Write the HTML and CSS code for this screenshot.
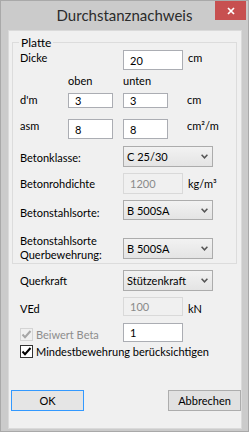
FILE: index.html
```html
<!DOCTYPE html>
<html lang="de">
<head>
    <meta charset="UTF-8">
    <meta name="viewport" content="width=device-width, initial-scale=1.0">
    <title>Durchstanznachweis</title>
    <link rel="stylesheet" href="styles.css">
</head>
<body>
    <div class="window">
        <div class="titlebar">
            <span class="title">Durchstanznachweis</span>
            <span class="close">
                <svg width="8" height="8" viewBox="0 0 8 8"><path d="M1 1L7 7M7 1L1 7" stroke="#fff" stroke-width="1.7"/></svg>
            </span>
        </div>

        <div class="client">
            <fieldset class="group">
                <legend>Platte</legend>

                <div class="row row-dicke">
                    <span class="lbl">Dicke</span>
                    <input class="field w60" value="20">
                    <span class="unit">cm</span>
                </div>

                <div class="row row-heads">
                    <span class="lbl short"></span>
                    <span class="colhead">oben</span>
                    <span>unten</span>
                </div>

                <div class="row row-dm">
                    <span class="lbl short">d'm</span>
                    <input class="field w45" value="3">
                    <input class="field w45 second" value="3">
                    <span class="unit far">cm</span>
                </div>

                <div class="row row-asm">
                    <span class="lbl short">asm</span>
                    <input class="field w45" value="8">
                    <input class="field w45 second" value="8">
                    <span class="unit far">cm²/m</span>
                </div>

                <div class="row row-klasse">
                    <span class="lbl">Betonklasse:</span>
                    <div class="combo">
                        <span>C 25/30</span>
                        <svg class="chev" width="7" height="5" viewBox="0 0 7 5"><path d="M0.6 0.8L3.5 3.8L6.4 0.8" fill="none" stroke="#555" stroke-width="1.5"/></svg>
                    </div>
                </div>

                <div class="row row-dichte">
                    <span class="lbl">Betonrohdichte</span>
                    <input class="field w60" value="1200" disabled>
                    <span class="unit">kg/m³</span>
                </div>

                <div class="row row-stahl">
                    <span class="lbl">Betonstahlsorte:</span>
                    <div class="combo">
                        <span>B 500SA</span>
                        <svg class="chev" width="7" height="5" viewBox="0 0 7 5"><path d="M0.6 0.8L3.5 3.8L6.4 0.8" fill="none" stroke="#555" stroke-width="1.5"/></svg>
                    </div>
                </div>

                <div class="row row-quer">
                    <span class="lbl two">Betonstahlsorte<br>Querbewehrung:</span>
                    <div class="combo">
                        <span>B 500SA</span>
                        <svg class="chev" width="7" height="5" viewBox="0 0 7 5"><path d="M0.6 0.8L3.5 3.8L6.4 0.8" fill="none" stroke="#555" stroke-width="1.5"/></svg>
                    </div>
                </div>
            </fieldset>

            <div class="row outer row-kraft">
                <span class="lbl">Querkraft</span>
                <div class="combo">
                    <span>Stützenkraft</span>
                    <svg class="chev" width="7" height="5" viewBox="0 0 7 5"><path d="M0.6 0.8L3.5 3.8L6.4 0.8" fill="none" stroke="#555" stroke-width="1.5"/></svg>
                </div>
            </div>

            <div class="row outer row-ved">
                <span class="lbl">VEd</span>
                <input class="field w60" value="100" disabled>
                <span class="unit">kN</span>
            </div>

            <div class="row outer row-beta">
                <span class="lbl checklbl disabled">
                    <span class="check">
                        <svg width="11" height="11" viewBox="0 0 11 11"><path d="M1.5 5.5L4 8.2L9.5 2" fill="none" stroke="#a6a6a6" stroke-width="2"/></svg>
                    </span>
                    Beiwert Beta
                </span>
                <input class="field w60" value="1">
            </div>

            <div class="row outer row-min">
                <span class="checklbl">
                    <span class="check">
                        <svg width="11" height="11" viewBox="0 0 11 11"><path d="M1.5 5.5L4 8.2L9.5 2" fill="none" stroke="#000" stroke-width="2"/></svg>
                    </span>
                    Mindestbewehrung berücksichtigen
                </span>
            </div>

            <div class="buttons">
                <button class="btn default">OK</button>
                <button class="btn">Abbrechen</button>
            </div>
        </div>
    </div>
</body>
</html>
```

FILE: styles.css
```css
body {
    margin: 0;
    background: #fff;
    font-family: Lato, "Noto Sans", sans-serif;
    font-size: 11px;
    color: #000;
}

.window {
    width: 249px;
    height: 432px;
    box-sizing: border-box;
    border: 1px solid #a9a9a9;
    background: #cbcbcb;
    display: flex;
    flex-direction: column;
}

.titlebar {
    height: 29px;
    flex: none;
    display: grid;
    grid-template-columns: 1fr auto 1fr;
}

.title {
    grid-column: 2;
    font-size: 15px;
    line-height: 29px;
    color: #2b2b2b;
}

.close {
    grid-column: 3;
    justify-self: end;
    width: 31px;
    height: 19px;
    margin-right: 2px;
    background: #c75050;
    display: flex;
    align-items: center;
    justify-content: center;
}

.client {
    height: 399px;
    box-sizing: border-box;
    margin: 0 6px 0 7px;
    border: 1px solid #dadada;
    background: #f0f0f0;
    display: flex;
    flex-direction: column;
}

/* group box "Platte" */
.group {
    margin: 5px 4px 0 3px;
    padding: 1px 0 4px 7px;
    border: 1px solid #dcdcdc;
    min-width: 0;
}

.group legend {
    padding: 0 2px;
    margin-left: -1px;
    line-height: 13px;
    font-size: 12px;
}

.row {
    display: flex;
    align-items: center;
    flex: none;
}

.row.outer {
    padding-left: 11px;
}

.lbl {
    width: 103px;
    flex: none;
    line-height: 15px;
}

.lbl.short {
    width: 48px;
}

.lbl.two {
    line-height: 14px;
}

.colhead {
    width: 55px;
}

.unit {
    margin-left: 5px;
    line-height: 15px;
}

.unit.far {
    margin-left: 19px;
}

.field {
    box-sizing: border-box;
    height: 100%;
    margin: 0;
    border: 1px solid #abadb3;
    background: #fff;
    padding: 0 6px;
    font: inherit;
    color: #000;
    outline: none;
}

.field:disabled {
    background: #f0f0f0;
    border-color: #d9d9d9;
    color: #8a8a8a;
}

.w60 { width: 60px; }
.w45 { width: 45px; }

.field.second {
    margin-left: 10px;
}

.combo {
    box-sizing: border-box;
    width: 90px;
    height: 100%;
    border: 1px solid #acacac;
    background: linear-gradient(#f2f2f2, #e4e4e4);
    padding: 0 4px 0 3px;
    display: flex;
    align-items: center;
    justify-content: space-between;
}

.chev {
    display: block;
}

.row-dicke  { height: 20px; margin-top: 0; }
.row-heads  { height: 14px; margin-top: 3px; }
.row-dm     { height: 15px; margin-top: 6px; }
.row-asm    { height: 20px; margin-top: 11px; }
.row-klasse { height: 21px; margin-top: 7px; }
.row-dichte { height: 21px; margin-top: 6px; }
.row-stahl  { height: 20px; margin-top: 6px; }
.row-quer   { height: 21px; margin-top: 18px; }
.row-kraft  { height: 21px; margin-top: 6px; }
.row-ved    { height: 19px; margin-top: 6px; }
.row-beta   { height: 19px; margin-top: 7px; }
.row-min    { height: 13px; margin-top: 3px; }

/* static texts sit a little off the control centre */
.row-dicke .lbl, .row-dicke .unit { margin-bottom: 6px; }
.row-dm .lbl, .row-dm .unit { margin-bottom: 3px; }
.row-asm .lbl, .row-asm .unit { margin-bottom: 7px; }
.row-klasse .lbl { margin-top: 2px; }
.row-stahl .lbl { margin-top: 4px; }
.row-quer .lbl { margin-bottom: 2px; }
.row-ved .lbl, .row-ved .unit { margin-top: 3px; }
.row-beta .lbl { margin-top: 3px; }

.checklbl {
    display: flex;
    align-items: center;
    line-height: 15px;
}

.check {
    width: 13px;
    height: 13px;
    box-sizing: border-box;
    border: 1px solid #333;
    background: #fff;
    margin-right: 3px;
    flex: none;
}

.check svg {
    display: block;
}

.checklbl.disabled {
    color: #8d8d8d;
}

.checklbl.disabled .check {
    border-color: #d4d4d4;
    background: #f0f0f0;
}

.buttons {
    margin-top: 32px;
    padding-left: 2px;
    display: flex;
    justify-content: space-between;
}

.btn {
    width: 73px;
    height: 21px;
    margin: 0;
    padding: 0;
    border: 1px solid #adadad;
    background: #e1e1e1;
    font: inherit;
    color: #000;
}

.btn.default {
    border-color: #3399ff;
    background: #e5e5e5;
}
```
